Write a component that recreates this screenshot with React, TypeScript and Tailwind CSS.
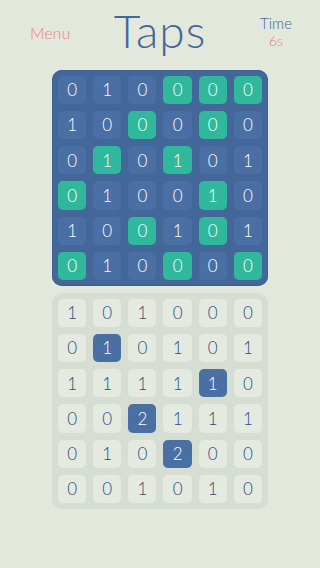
import React from 'react';

const topBoard: [number, boolean][][] = [
  [[0, false], [1, false], [0, false], [0, true], [0, true], [0, true]],
  [[1, false], [0, false], [0, true], [0, false], [0, true], [0, false]],
  [[0, false], [1, true], [0, false], [1, true], [0, false], [1, false]],
  [[0, true], [1, false], [0, false], [0, false], [1, true], [0, false]],
  [[1, false], [0, false], [0, true], [1, false], [0, true], [1, false]],
  [[0, true], [1, false], [0, false], [0, true], [0, false], [0, true]],
];

const bottomBoard: [number, boolean][][] = [
  [[1, false], [0, false], [1, false], [0, false], [0, false], [0, false]],
  [[0, false], [1, true], [0, false], [1, false], [0, false], [1, false]],
  [[1, false], [1, false], [1, false], [1, false], [1, true], [0, false]],
  [[0, false], [0, false], [2, true], [1, false], [1, false], [1, false]],
  [[0, false], [1, false], [0, false], [2, true], [0, false], [0, false]],
  [[0, false], [0, false], [1, false], [0, false], [1, false], [0, false]],
];

export default function App() {
  return (
    <div
      className="w-[320px] h-[568px] bg-[#e2e8dc] flex flex-col items-center"
      style={{ fontFamily: 'Lato, "Open Sans", sans-serif' }}
    >
      {/* Header */}
      <div className="w-full h-[70px] flex items-start">
        <div className="w-[100px] pt-[24px] pl-[30px] text-[16px] font-light text-[#e97f88] leading-[18px]">
          Menu
        </div>
        <div className="flex-1 flex justify-center pt-[4px]">
          <span className="text-[46px] font-light text-[#44679a] leading-[54px] tracking-[1px]">Taps</span>
        </div>
        <div className="w-[100px] pt-[15px] pr-[28px] flex flex-col items-end">
          <div className="flex flex-col items-center">
            <span className="text-[15px] font-light text-[#44679a] leading-[16px]">Time</span>
            <span className="text-[14px] font-light text-[#e97f88] leading-[16px] mt-[2px]">6s</span>
          </div>
        </div>
      </div>

      {/* Top board */}
      <div className="w-[216px] h-[216px] bg-[#44679a] rounded-[10px] p-[6px] grid grid-cols-6 grid-rows-6 gap-[7px] shadow-[inset_0_0_0_1px_#3e6090]">
        {topBoard.flat().map(([n, on], i) => (
          <div
            key={i}
            className={
              on
                ? 'rounded-[5px] bg-[#30b89c] flex items-center justify-center text-white text-[17px] font-light'
                : 'rounded-[5px] bg-[#4a6fa4] flex items-center justify-center text-white text-[17px] font-light'
            }
          >
            {n}
          </div>
        ))}
      </div>

      {/* Bottom board */}
      <div className="mt-[7px] w-[216px] h-[216px] bg-[#d6ddd2] rounded-[10px] p-[6px] grid grid-cols-6 grid-rows-6 gap-[7px]">
        {bottomBoard.flat().map(([n, on], i) => (
          <div
            key={i}
            className={
              on
                ? 'rounded-[5px] bg-[#4a6fa2] flex items-center justify-center text-white text-[17px] font-light'
                : 'rounded-[5px] bg-[#e4eadf] flex items-center justify-center text-[#2e4d7e] text-[17px] font-light'
            }
          >
            {n}
          </div>
        ))}
      </div>
    </div>
  );
}
